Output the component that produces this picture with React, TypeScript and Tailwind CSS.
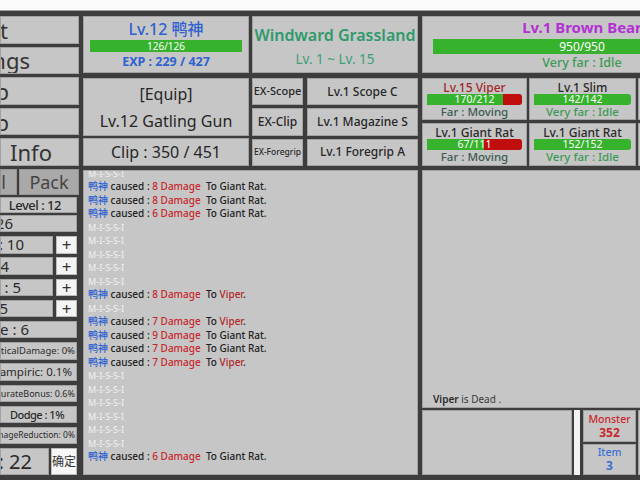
import React from 'react';

type LogLine = { miss: true } | { miss?: false; dmg: number; target: 'Giant Rat' | 'Viper' };

const LOG: LogLine[] = [
  { miss: true },
  { dmg: 8, target: 'Giant Rat' },
  { dmg: 8, target: 'Giant Rat' },
  { dmg: 6, target: 'Giant Rat' },
  { miss: true },
  { miss: true },
  { miss: true },
  { miss: true },
  { miss: true },
  { dmg: 8, target: 'Viper' },
  { miss: true },
  { dmg: 7, target: 'Viper' },
  { dmg: 9, target: 'Giant Rat' },
  { dmg: 7, target: 'Giant Rat' },
  { dmg: 7, target: 'Viper' },
  { miss: true },
  { miss: true },
  { miss: true },
  { miss: true },
  { miss: true },
  { miss: true },
  { dmg: 6, target: 'Giant Rat' },
];

interface Monster {
  name: string;
  hp: number;
  max: number;
  state: string;
  far: boolean;
  hostile?: boolean;
}

const MONSTERS: Monster[] = [
  { name: 'Lv.15 Viper', hp: 170, max: 212, state: 'Moving', far: false, hostile: true },
  { name: 'Lv.1 Slim', hp: 142, max: 142, state: 'Idle', far: true },
  { name: 'Lv.1 Slim', hp: 142, max: 142, state: 'Idle', far: true },
  { name: 'Lv.1 Giant Rat', hp: 67, max: 111, state: 'Moving', far: false },
  { name: 'Lv.1 Giant Rat', hp: 152, max: 152, state: 'Idle', far: true },
  { name: 'Lv.1 Giant Rat', hp: 152, max: 152, state: 'Idle', far: true },
];

const panel = 'bg-[#c6c6c6] border border-[#a2a2a2]';

const SideButton = ({ label, pr }: { label: string; pr: string }) => (
  <div className={`flex-1 ${panel} bg-[#c0c0c0] flex items-center justify-end overflow-hidden whitespace-nowrap text-[22px] leading-none text-[#333] ${pr}`}>
    {label}
  </div>
);

const StatRow = ({ label, cls, plus }: { label: string; cls: string; plus?: boolean }) => (
  <div className="h-[17.4px] flex gap-[3px]">
    <div className={`flex-1 min-w-0 ${panel} flex items-center justify-end overflow-hidden whitespace-nowrap leading-none text-[#2a2a2a] ${cls}`}>
      {label}
    </div>
    {plus && (
      <div className="w-[21px] shrink-0 bg-[#f4f4f4] border border-[#bdbdbd] flex items-center justify-center text-[17px] leading-none text-[#333]">
        +
      </div>
    )}
  </div>
);

const HpBar = ({ hp, max, cls }: { hp: number; max: number; cls: string }) => {
  const pct = (hp / max) * 100;
  return (
    <div className={`relative bg-[#c00d0d] rounded-r-[3px] overflow-hidden ${cls}`}>
      <div className="h-full bg-[#36b22c]" style={{ width: `${pct}%` }} />
      <div className="absolute inset-0 flex items-center justify-center text-white">
        {hp}/{max}
      </div>
    </div>
  );
};

const MonsterCell = ({ m }: { m: Monster }) => (
  <div className={`${panel} flex flex-col items-center justify-center px-[4px] overflow-hidden whitespace-nowrap`}>
    <div className={`text-[12px] leading-[13px] font-medium ${m.hostile ? 'text-[#a3262a]' : 'text-[#2a2a2a]'}`}>{m.name}</div>
    <HpBar hp={m.hp} max={m.max} cls="w-full h-[11px] text-[10.5px] leading-none" />
    <div className={`text-[11.5px] leading-[13px] font-medium ${m.far ? 'text-[#3c9a55]' : 'text-[#3d5a52]'}`}>
      {m.far ? 'Very far' : 'Far'} : {m.state}
    </div>
  </div>
);

export default function App() {
  return (
    <div className="w-[640px] h-[480px] overflow-hidden bg-[#3d3d3d] flex flex-col font-['Noto_Sans','Noto_Sans_CJK_SC',sans-serif]">
      <div className="h-[11px] shrink-0 bg-[#fbfbfb] border-b border-[#9c9c9c]" />
      <div className="flex pt-[5px] gap-[4px]">
        {/* left menu + stats */}
        <div className="w-[79px] shrink-0 flex flex-col">
          <div className="h-[150px] flex flex-col gap-[3px]">
            <SideButton label="Exit" pr="pr-[70px]" />
            <SideButton label="Settings" pr="pr-[48px]" />
            <SideButton label="Shop" pr="pr-[69px]" />
            <SideButton label="Help" pr="pr-[69px]" />
            <SideButton label="Info" pr="pr-[26px]" />
          </div>
          <div className="h-[26px] mt-[3px] flex gap-[2px] text-[18px] leading-none text-[#444]">
            <div className="w-[17px] shrink-0 bg-[#a9a9a9] border border-[#959595] flex items-center justify-end overflow-hidden whitespace-nowrap pr-[10px]">Skill</div>
            <div className="flex-1 bg-[#a9a9a9] border border-[#959595] flex items-center justify-center">Pack</div>
          </div>
          <div className={`h-[16px] mt-[2px] mr-[2px] ${panel} flex items-center justify-end overflow-hidden whitespace-nowrap pr-[15px] text-[13px] tracking-[-0.5px] leading-none font-medium text-[#2a2a2a]`}>Level : 12</div>
          <div className="mt-[2px] mr-[2px] flex flex-col gap-[3.8px]">
            <StatRow label="HP : 126" cls="pr-[63px] text-[15px]" />
            <StatRow label="Power : 10" cls="pr-[28px] text-[15px]" plus />
            <StatRow label="Agile : 4" cls="pr-[43px] text-[15px]" plus />
            <StatRow label="Vital : 5" cls="pr-[31px] text-[15px]" plus />
            <StatRow label="Lucky : 5" cls="pr-[44px] text-[15px]" plus />
            <StatRow label="Attribute : 6" cls="pr-[47px] text-[15px]" />
            <StatRow label="CriticalDamage: 0%" cls="pr-[1px] text-[9.5px]" />
            <StatRow label="Vampiric: 0.1%" cls="pr-[4px] text-[11.5px]" />
            <StatRow label="AccurateBonus: 0.6%" cls="pr-[1px] text-[9px]" />
            <StatRow label="Dodge : 1%" cls="pr-[12px] text-[11px] tracking-[-0.5px] font-medium" />
            <StatRow label="DamageReduction: 0%" cls="pr-[1px] text-[8.5px]" />
          </div>
          <div className="h-[26.6px] mt-[4px] mr-[2px] flex gap-[2px]">
            <div className={`flex-1 ${panel} flex items-center justify-end overflow-hidden whitespace-nowrap pr-[16px] text-[20px] leading-none text-[#2a2a2a]`}>Point : 22</div>
            <div className="w-[26px] shrink-0 bg-[#f6f6f6] border border-[#bdbdbd] flex items-center justify-center text-[12px] text-[#333]">确定</div>
          </div>
        </div>

        {/* middle */}
        <div className="w-[335px] shrink-0 flex flex-col">
          <div className="h-[57px] flex gap-[3px]">
            <div className={`w-[166px] shrink-0 ${panel} flex flex-col items-center pt-[2px] px-[6px]`}>
              <div className="text-[16px] leading-[20px] font-medium text-[#2f62d0]">Lv.12 鸭神</div>
              <div className="w-full h-[12px] mt-[1px] bg-[#36b22c] flex items-center justify-center text-[10px] leading-none text-white">126/126</div>
              <div className="text-[12.5px] leading-[16px] mt-[2px] font-bold text-[#2f62d0]">EXP : 229 / 427</div>
            </div>
            <div className={`flex-1 min-w-0 ${panel} flex flex-col items-center pt-[8px]`}>
              <div className="text-[16px] leading-[20px] font-semibold text-[#2e9a6c] whitespace-nowrap">Windward Grassland</div>
              <div className="text-[13.5px] leading-[16px] mt-[6px] text-[#3d9f76]">Lv. 1 ~ Lv. 15</div>
            </div>
          </div>
          <div className="h-[88px] mt-[5px] flex gap-[3px]">
            <div className="w-[166px] shrink-0 flex flex-col gap-[2px] text-[#262626]">
              <div className={`h-[58px] ${panel} flex flex-col items-center justify-center gap-[7px] text-[16px] leading-[20px]`}>
                <div>[Equip]</div>
                <div>Lv.12 Gatling Gun</div>
              </div>
              <div className={`flex-1 ${panel} flex items-center justify-center text-[16px]`}>Clip : 350 / 451</div>
            </div>
            <div className="flex-1 min-w-0 flex flex-col gap-[3px] text-[#262626]">
              {[
                ['EX-Scope', 'Lv.1 Scope C', 'text-[11px]'],
                ['EX-Clip', 'Lv.1 Magazine S', 'text-[12px]'],
                ['EX-Foregrip', 'Lv.1 Foregrip A', 'text-[8.5px]'],
              ].map(([k, v, size]) => (
                <div key={k} className="flex-1 flex gap-[4px]">
                  <div className={`w-[51px] shrink-0 ${panel} flex items-center justify-center font-medium whitespace-nowrap ${size}`}>{k}</div>
                  <div className={`flex-1 ${panel} flex items-center justify-center text-[12px] font-medium`}>{v}</div>
                </div>
              ))}
            </div>
          </div>
          <div className={`h-[305px] mt-[4px] ${panel} bg-[#c4c4c4] overflow-hidden pl-[4px]`}>
            <div className="mt-[-4.25px] text-[10px] leading-[13.5px] font-medium whitespace-pre">
              {LOG.map((l, i) =>
                l.miss ? (
                  <div key={i} className="text-[#ededed] text-[9px]">M-I-S-S-I</div>
                ) : (
                  <div key={i} className="text-[#222]">
                    <span className="text-[#2c5fd4]">鸭神</span>
                    {' caused : '}
                    <span className="text-[#c9272d]">{l.dmg} Damage</span>
                    {'  To '}
                    {l.target === 'Viper' ? <span className="text-[#b3262a]">Viper</span> : 'Giant Rat'}
                    .
                  </div>
                )
              )}
            </div>
          </div>
        </div>

        {/* right */}
        <div className="w-[320px] shrink-0 flex flex-col">
          <div className={`h-[57px] ${panel} flex flex-col items-center pt-[1px] px-[10px]`}>
            <div className="text-[15px] leading-[18px] font-bold text-[#b331d4]">Lv.1 Brown Bear</div>
            <div className="w-full h-[15px] mt-[3px] bg-[#36b22c] flex items-center justify-center text-[12px] leading-none text-white">950/950</div>
            <div className="text-[12.5px] leading-[18px] font-medium text-[#3c9a55]">Very far : Idle</div>
          </div>
          <div className="h-[88px] mt-[5px] grid grid-cols-[105px_107px_105px] grid-rows-[42px_43px] gap-x-[2px] gap-y-[3px]">
            {MONSTERS.map((m, i) => (
              <MonsterCell key={i} m={m} />
            ))}
          </div>
          <div className={`h-[238px] mt-[4px] ${panel} flex flex-col justify-end pl-[10px] pb-0`}>
            <div className="text-[10px] leading-[16px] text-[#3a3a3a]">
              <span className="font-semibold text-[#2a2a2a]">Viper</span> is Dead .
            </div>
          </div>
          <div className="h-[65px] mt-[2px] flex">
            <div className={`w-[150px] shrink-0 ${panel}`} />
            <div className="w-[6px] shrink-0 ml-[2px] bg-[#f3f3f3]" />
            <div className="w-[53px] shrink-0 ml-[3px] flex flex-col gap-[2px]">
              <div className={`flex-1 ${panel} flex flex-col items-center justify-center`}>
                <div className="text-[10.5px] leading-[14px] font-medium text-[#c9272d]">Monster</div>
                <div className="text-[12px] leading-[14px] font-bold text-[#c9272d]">352</div>
              </div>
              <div className={`flex-1 ${panel} flex flex-col items-center justify-center`}>
                <div className="text-[10.5px] leading-[14px] font-medium text-[#3a6fd8]">Item</div>
                <div className="text-[12px] leading-[14px] font-bold text-[#3a6fd8]">3</div>
              </div>
            </div>
            <div className={`w-[53px] shrink-0 ml-[2px] ${panel}`} />
          </div>
        </div>
      </div>
    </div>
  );
}
